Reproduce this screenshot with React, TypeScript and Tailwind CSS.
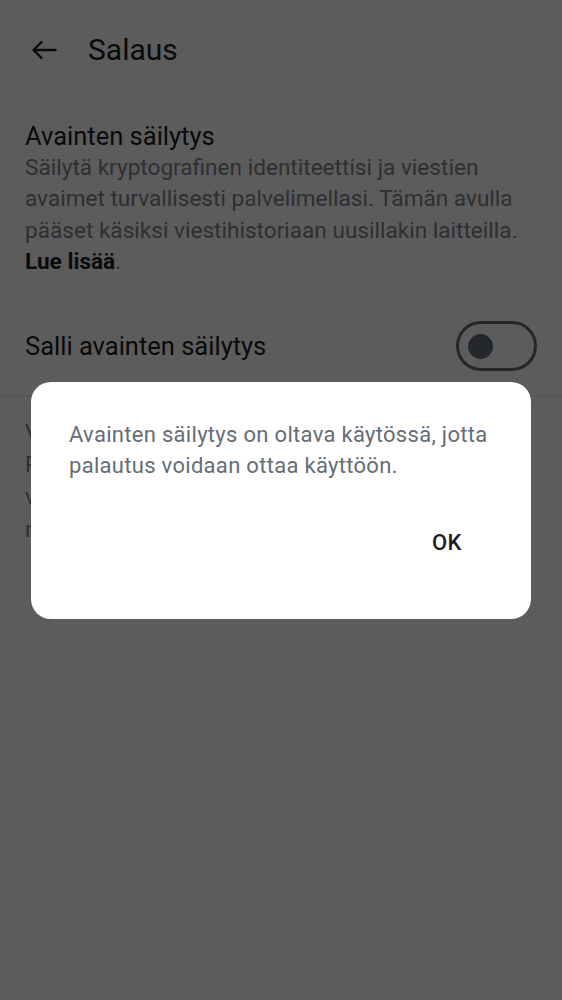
import React from "react";

const BackArrow = () => (
  <svg width="26" height="20" viewBox="0 0 26 20" fill="none">
    <path
      d="M24.5 10H3M10.5 2 2.5 10l8 8"
      stroke="#1b1d22"
      strokeWidth="2.4"
      strokeLinecap="round"
      strokeLinejoin="round"
    />
  </svg>
);

const Toggle: React.FC<{ on: boolean }> = ({ on }) => (
  <div
    className={`w-[81px] h-[50px] rounded-full border-[3px] border-[#656d77] flex items-center px-[9px] ${
      on ? "justify-end" : "justify-start"
    }`}
  >
    <div className="w-[25px] h-[25px] rounded-full bg-[#656d77]" />
  </div>
);

export default function App() {
  return (
    <div
      className="relative min-h-[1000px] bg-white text-[#1b1d22]"
      style={{ fontFamily: "Roboto, 'Noto Sans', sans-serif" }}
    >
      {/* header */}
      <div className="h-[100px] flex items-center pl-[31px]">
        <BackArrow />
        <h1 className="ml-[31px] text-[30px] leading-none">Salaus</h1>
      </div>

      {/* key storage */}
      <div className="px-[25px] pt-[20px] pb-[19px]">
        <div className="text-[25.5px] leading-[32px]">Avainten säilytys</div>
        <p className="text-[22.6px] leading-[31.4px] text-[#7c838d]">
          Säilytä kryptografinen identiteettisi ja viestien avaimet
          turvallisesti palvelimellasi. Tämän avulla pääset käsiksi
          viestihistoriaan uusillakin laitteilla.{" "}
          <span className="font-bold text-[#1b1d22]">Lue lisää</span>.
        </p>
      </div>

      <div className="h-[100px] flex items-center justify-between pl-[25px] pr-[25px] border-b border-[#e1e6ec]">
        <span className="text-[25.5px]">Salli avainten säilytys</span>
        <Toggle on={false} />
      </div>

      {/* recovery */}
      <div className="px-[25px] pt-[20px]">
        <p className="text-[22.6px] leading-[32.3px] text-[#7c838d]">
          Vahvista palautusavain tai luo uusi tarvittaessa.
          <br />
          Palautusavaimella voit palauttaa identiteettisi ja
          <br />
          viestihistoriasi, jos olet menettänyt kaikki
          <br />
          nykyiset laitteesi.
        </p>
      </div>

      {/* dialog */}
      <div className="fixed inset-0 bg-black/[0.64] flex items-center justify-center">
        <div className="w-[500px] bg-white rounded-[20px] pt-[37px] pb-[52px]">
          <p className="px-[38px] text-[22px] leading-[31px] text-[#656d77] tracking-[0.3px]">
            Avainten säilytys on oltava käytössä, jotta palautus voidaan ottaa
            käyttöön.
          </p>
          <div className="flex justify-end pr-[53px] mt-[38px]">
            <button className="h-[48px] px-[16px] text-[22px] font-medium text-[#1b1d22] tracking-[0.5px]">
              OK
            </button>
          </div>
        </div>
      </div>
    </div>
  );
}
